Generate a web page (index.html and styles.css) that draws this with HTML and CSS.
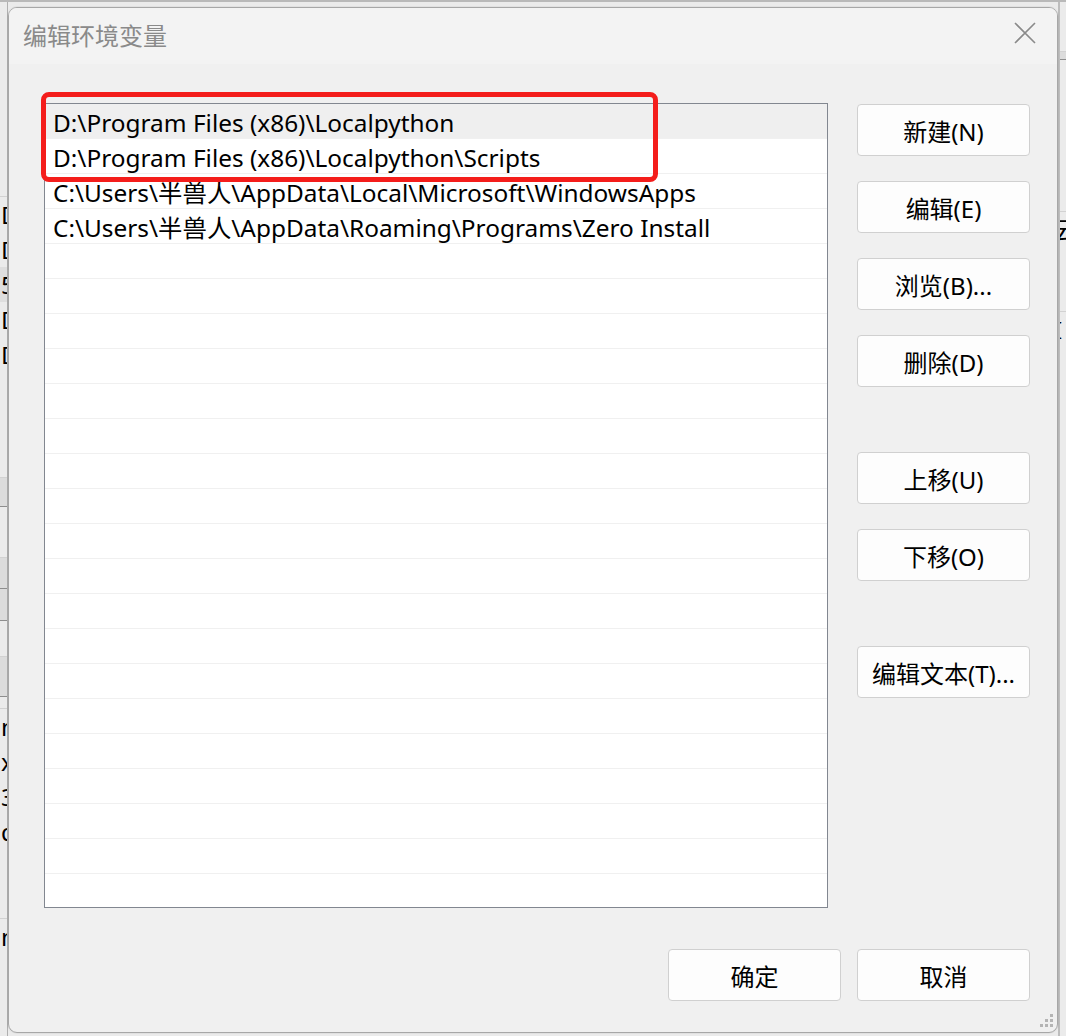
FILE: index.html
```html
<!DOCTYPE html>
<html lang="zh-CN">
<head>
    <meta charset="UTF-8">
    <meta name="viewport" content="width=device-width, initial-scale=1.0">
    <title>编辑环境变量</title>
    <link rel="stylesheet" href="styles.css">
</head>
<body>
    <div class="desk">
        <!-- 后面窗口露出的左侧一条 -->
        <div class="behind behind-left">
            <div class="band" style="height: 195px"></div>
            <div class="bline">D</div>
            <div class="bline">D</div>
            <div class="bline hl">5</div>
            <div class="bline">D</div>
            <div class="bline">D</div>
            <div class="band" style="height: 106px"></div>
            <div class="band tab" style="height: 29px"></div>
            <div class="band" style="height: 51px"></div>
            <div class="band tab" style="height: 31px"></div>
            <div class="band tab" style="height: 32px"></div>
            <div class="band" style="height: 36px"></div>
            <div class="band tab" style="height: 40px"></div>
            <div class="band" style="height: 12px"></div>
            <div class="bline">m</div>
            <div class="bline">x</div>
            <div class="bline">3</div>
            <div class="bline">d</div>
            <div class="band" style="height: 70px"></div>
            <div class="bline">m</div>
        </div>

        <div class="dialog">
            <div class="titlebar">
                <span class="title">编辑环境变量</span>
                <span class="close">
                    <svg width="22" height="22" viewBox="0 0 22 22">
                        <path d="M1 1 L21 21 M21 1 L1 21" stroke="#8a8a8a" stroke-width="1.6" fill="none"/>
                    </svg>
                </span>
            </div>

            <div class="content">
                <div class="main">
                    <div class="list" id="pathList">
                        <div class="row selected">D:\Program Files (x86)\Localpython</div>
                        <div class="row">D:\Program Files (x86)\Localpython\Scripts</div>
                        <div class="row">C:\Users\半兽人\AppData\Local\Microsoft\WindowsApps</div>
                        <div class="row">C:\Users\半兽人\AppData\Roaming\Programs\Zero Install</div>
                    </div>

                    <div class="side">
                        <button class="btn">新建(N)</button>
                        <button class="btn">编辑(E)</button>
                        <button class="btn">浏览(B)...</button>
                        <button class="btn">删除(D)</button>
                        <button class="btn sep">上移(U)</button>
                        <button class="btn">下移(O)</button>
                        <button class="btn sep">编辑文本(T)...</button>
                    </div>
                </div>

                <div class="footer">
                    <button class="btn">确定</button>
                    <button class="btn">取消</button>
                </div>
            </div>

            <div class="mark"></div>

            <svg class="grip" width="16" height="16" viewBox="0 0 16 16">
                <rect x="12" y="1" width="3" height="3" fill="#b4b4b4"/>
                <rect x="7" y="6" width="3" height="3" fill="#b4b4b4"/>
                <rect x="12" y="6" width="3" height="3" fill="#b4b4b4"/>
                <rect x="2" y="11" width="3" height="3" fill="#b4b4b4"/>
                <rect x="7" y="11" width="3" height="3" fill="#b4b4b4"/>
                <rect x="12" y="11" width="3" height="3" fill="#b4b4b4"/>
            </svg>
        </div>

        <div class="behind behind-right">
            <div class="band" style="height: 50px"></div>
            <div class="band tab" style="height: 8px"></div>
            <div class="band" style="height: 152px"></div>
            <div class="bline r">云</div>
            <div class="band" style="height: 65px"></div>
            <div class="bline r">I</div>
        </div>
    </div>

    <script>
        // 空行补满列表
        const list = document.getElementById('pathList');
        for (let i = 0; i < 19; i++) {
            const row = document.createElement('div');
            row.className = 'row';
            list.appendChild(row);
        }
    </script>
</body>
</html>
```

FILE: styles.css
```css
:root {
    --face: #f0f0f0;
    --line: #f0f0f0;
    --mark: #f41d1b;
}

body {
    margin: 0;
    background: #ebebeb;
    font-family: "Noto Sans", "Noto Sans CJK SC", sans-serif;
    overflow: hidden;
}

.desk {
    display: flex;
    height: 1036px;
    border-top: 2px solid #b9b9b9;
    box-sizing: border-box;
}

.behind {
    width: 8px;
    overflow: hidden;
    flex-shrink: 0;
    background: #ebebeb;
}

.behind-left {
    border-right: 1px solid #b0b0b0;
    box-sizing: border-box;
}

.band {
    border-bottom: 1px solid #d2d2d2;
    box-sizing: border-box;
}

.band.tab {
    background: #dcdcdc;
    border-bottom-color: #8e8e8e;
}

.bline {
    height: 35px;
    line-height: 35px;
    font-size: 24px;
    color: #000;
    padding-left: 1px;
    white-space: nowrap;
}

.bline.hl {
    background: #dedede;
}

.bline.r {
    padding-left: 0;
    margin-left: -6px;
}

.behind-right {
    border-left: 2px solid #bdbdbd;
    box-sizing: border-box;
}

.dialog {
    position: relative;
    width: 1050px;
    height: 1026px;
    margin-top: 5px;
    flex-shrink: 0;
    background: var(--face);
    border: 1px solid #a7a7a7;
    border-radius: 9px;
    box-sizing: border-box;
    box-shadow: 0 0 0 1px rgba(0,0,0,0.04);
    overflow: hidden;
}

.titlebar {
    height: 56px;
    display: flex;
    justify-content: space-between;
    align-items: flex-start;
    background: #f3f3f3;
}

.title {
    padding: 14px 0 0 14px;
    font-size: 24px;
    line-height: 26px;
    color: #8a8a8a;
    font-family: "Noto Sans CJK SC", sans-serif;
}

.close {
    display: block;
    margin: 14px 21px 0 0;
    width: 22px;
    height: 22px;
}

.close svg {
    display: block;
}

.content {
    padding: 39px 27px 0 35px;
}

.main {
    display: flex;
    gap: 29px;
}

.list {
    width: 784px;
    height: 805px;
    background: #fff;
    border: 1px solid #828790;
    box-sizing: border-box;
    overflow: hidden;
}

.row {
    height: 35px;
    border-bottom: 1px solid var(--line);
    box-sizing: border-box;
    padding: 2px 0 0 8px;
    font-size: 24.4px;
    line-height: 33px;
    color: #000;
    white-space: nowrap;
}

.row.selected {
    background: #efefef;
}

.side {
    display: flex;
    flex-direction: column;
    gap: 25px;
    padding-top: 1px;
}

.btn {
    width: 173px;
    height: 52px;
    background: #fdfdfd;
    border: 1px solid #d0d0d0;
    border-radius: 4px;
    font-family: "Noto Sans", "Noto Sans CJK SC", sans-serif;
    font-size: 24px;
    color: #000;
    padding: 0;
    cursor: pointer;
}

.btn.sep {
    margin-top: 40px;
}

.footer {
    display: flex;
    justify-content: flex-end;
    gap: 16px;
    margin-top: 41px;
}

.mark {
    position: absolute;
    left: 32px;
    top: 84px;
    width: 617px;
    height: 90px;
    border: 5px solid var(--mark);
    border-radius: 8px;
    box-sizing: border-box;
}

.grip {
    position: absolute;
    right: 3px;
    bottom: 3px;
}
```
